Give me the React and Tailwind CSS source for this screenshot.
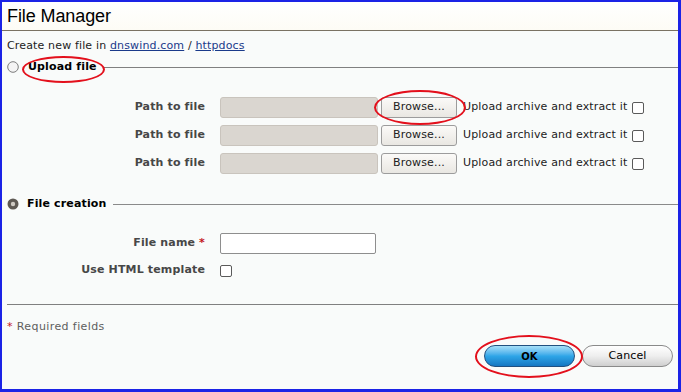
/**
 * App.jsx — File Manager: create new file dialog
 */

const UPLOAD_ROWS = [1, 2, 3];

function Checkbox() {
  return <span className="block w-[12px] h-[12px] border border-[#5a5a5a] rounded-[2px] bg-white" />;
}

function Radio({ checked }) {
  if (checked) {
    return (
      <svg width="12" height="12" viewBox="0 0 12 12" className="shrink-0">
        <circle cx="6" cy="6" r="5.5" fill="#5e5953" />
        <circle cx="6" cy="6" r="2.2" fill="#cfcac3" />
      </svg>
    );
  }
  return (
    <svg width="12" height="12" viewBox="0 0 12 12" className="shrink-0">
      <circle cx="6" cy="6" r="5.3" fill="#f4f4f4" stroke="#7d7d7d" strokeWidth="1" />
    </svg>
  );
}

function Ellipse({ className }) {
  return <div className={`absolute rounded-[50%] border-2 border-[#e3101c] pointer-events-none ${className}`} />;
}

export default function App() {
  return (
    <div className="relative w-[681px] h-[392px] overflow-hidden border-t-2 border-l-2 border-r-[3px] border-b-[3px] border-[#1b23e6] bg-[#f9fbfa] font-['DejaVu_Sans',sans-serif] text-[11px] tracking-[0.15px] text-[#222]">
      <div className="h-[29px] bg-gradient-to-b from-white to-[#fdfcf5] border-b border-[#7a7263] pl-[5px] flex items-center font-['Liberation_Sans',Arial,sans-serif] text-[18px] tracking-[-0.1px] text-black">
        File Manager
      </div>

      <div className="mt-[7px] pl-[5px] leading-[16px] h-[16px] text-[#222]">
        Create new file in <span className="text-[#1a3a8a] underline">dnswind.com</span> / <span className="text-[#1a3a8a] underline">httpdocs</span>
      </div>

      <div className="mt-[2px] h-[22px] flex items-center pl-[5px]">
        <Radio />
        <span className="ml-[9px] font-bold text-black">Upload file</span>
        <span className="ml-[7px] flex-1 h-px bg-[#808080]" />
      </div>

      <div className="mt-[19px] flex flex-col gap-[7px]">
        {UPLOAD_ROWS.map((row) => (
          <div key={row} className="h-[21px] flex items-center">
            <span className="w-[203px] text-right font-bold text-[#474747]">Path to file</span>
            <span className="ml-[15px] w-[158px] h-[21px] rounded-[3px] border border-[#c9c4bd] bg-[#dad6d0]" />
            <span className="ml-[3px] w-[76px] h-[21px] rounded-[3px] border border-[#9c9c9c] bg-gradient-to-b from-[#fbfaf8] to-[#e9e7e2] flex items-center justify-center text-[#222]">
              Browse...
            </span>
            <span className="ml-[6px] text-[#1c1c1c]">Upload archive and extract it</span>
            <span className="ml-[5px]"><Checkbox /></span>
          </div>
        ))}
      </div>

      <div className="mt-[19px] h-[22px] flex items-center pl-[5px]">
        <Radio checked />
        <span className="ml-[8px] font-bold text-black">File creation</span>
        <span className="ml-[6px] flex-1 h-px bg-[#8a8a8a]" />
      </div>

      <div className="mt-[18px] h-[21px] flex items-center">
        <span className="w-[203px] text-right font-bold text-[#474747]">
          File name <span className="text-[#c4161c]">*</span>
        </span>
        <span className="ml-[15px] w-[156px] h-[21px] rounded-[2px] border border-[#8e8e8e] bg-white" />
      </div>

      <div className="mt-[6px] h-[21px] flex items-center">
        <span className="w-[203px] text-right font-bold text-[#474747]">Use HTML template</span>
        <span className="ml-[15px]"><Checkbox /></span>
      </div>

      <div className="mt-[23px] ml-[5px] h-px bg-[#808080]" />

      <div className="mt-[14px] h-[16px] leading-[16px] pl-[5px] text-[#5e5e5e] tracking-[0.4px]">
        <span className="text-[#c4161c]">*</span> Required fields
      </div>

      <div className="mt-[10px] flex justify-end gap-[7px] pr-[5px]">
        <span className="w-[91px] h-[22px] rounded-full border border-[#21507f] bg-gradient-to-b from-[#a6e0f8] via-[#2ea6e8] to-[#1677c2] flex items-center justify-center font-bold text-[10px] text-black">
          OK
        </span>
        <span className="w-[91px] h-[22px] rounded-full border border-[#8a8a8a] bg-gradient-to-b from-white via-[#eeeeee] to-[#cfcfcf] flex items-center justify-center text-black">
          Cancel
        </span>
      </div>

      <Ellipse className="left-[20px] top-[54px] w-[83px] h-[27px]" />
      <Ellipse className="left-[372px] top-[88px] w-[92px] h-[35px]" />
      <Ellipse className="left-[473px] top-[333px] w-[108px] h-[43px]" />
    </div>
  );
}
